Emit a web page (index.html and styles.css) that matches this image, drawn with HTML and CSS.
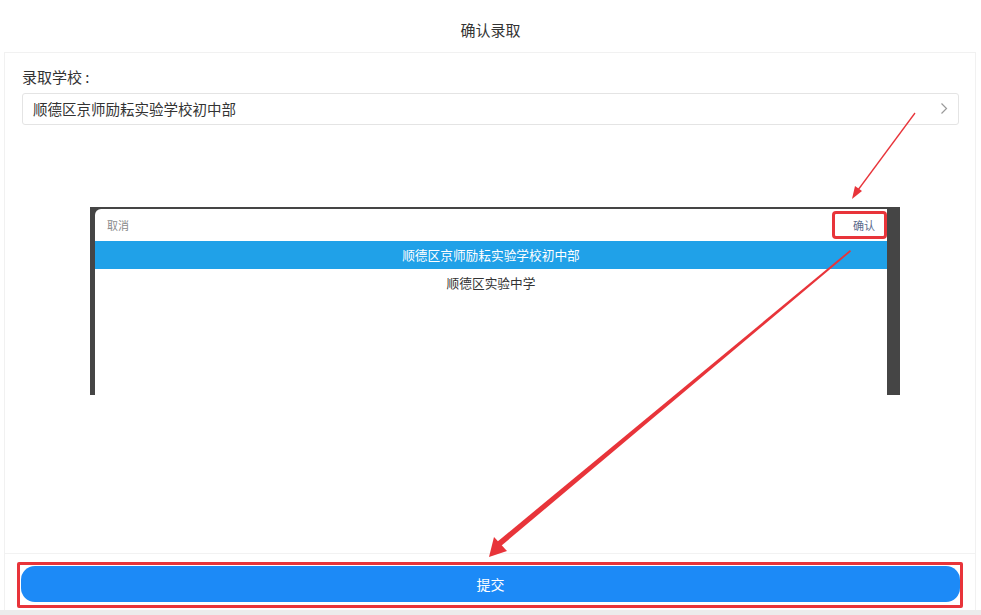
FILE: index.html
```html
<!DOCTYPE html>
<html lang="zh-CN">
<head>
    <meta charset="UTF-8">
    <meta name="viewport" content="width=device-width, initial-scale=1.0">
    <title>确认录取</title>
    <link rel="stylesheet" href="styles.css">
</head>
<body>
    <div class="page">
        <div class="top-bar">确认录取</div>

        <div class="card">
            <div class="card-body">
                <div class="field-label">录取学校 :</div>
                <div class="select-box">
                    <span>顺德区京师励耘实验学校初中部</span>
                    <svg class="chevron" width="8" height="13" viewBox="0 0 8 13">
                        <path d="M1.5 1.5 L6.5 6.5 L1.5 11.5" fill="none" stroke="#9a9a9a" stroke-width="1.2"/>
                    </svg>
                </div>

                <!-- picker screenshot -->
                <div class="picker-shot">
                    <div class="picker">
                        <div class="picker-head">
                            <span class="picker-cancel">取消</span>
                            <span class="picker-ok">确认</span>
                        </div>
                        <div class="picker-row active">顺德区京师励耘实验学校初中部</div>
                        <div class="picker-row">顺德区实验中学</div>
                    </div>
                </div>
            </div>

            <div class="card-foot">
                <div class="mark-box">
                    <button class="submit-btn">提交</button>
                </div>
            </div>
        </div>
        <div class="bottom-strip"></div>

        <!-- annotation arrows -->
        <svg class="arrows" width="981" height="615" viewBox="0 0 981 615">
            <line x1="915" y1="113" x2="858" y2="190" stroke="#e8343a" stroke-width="1.3"/>
            <polygon points="852,199 855,186 862,191" fill="#e8343a"/>
            <polygon points="850,250 851,251.5 501,546 497,542" fill="#e8343a"/>
            <polygon points="489,557 494,537 507,551" fill="#e8343a"/>
        </svg>
    </div>
</body>
</html>
```

FILE: styles.css
```css
* {
    box-sizing: border-box;
}

body {
    margin: 0;
    background: #fff;
    font-family: "Noto Sans CJK SC", "Noto Sans", sans-serif;
    color: #333;
}

.page {
    position: relative;
    width: 981px;
    height: 615px;
    overflow: hidden;
}

/* Title */
.top-bar {
    height: 52px;
    padding-top: 6px;
    display: flex;
    align-items: center;
    justify-content: center;
    font-size: 15px;
    color: #333;
}

.card {
    margin: 0 5px 0 4px;
    height: 558px;
    border: 1px solid #f1f1f1;
    border-bottom: none;
    display: flex;
    flex-direction: column;
}

.card-body {
    flex: 1;
    padding: 14px 16px 0 17px;
}

.field-label {
    font-size: 15px;
    line-height: 20px;
    color: #333;
}

.select-box {
    margin-top: 6px;
    height: 32px;
    border: 1px solid #e4e4e4;
    border-radius: 3px;
    padding: 0 10px 2px 10px;
    display: flex;
    align-items: center;
    justify-content: space-between;
    font-size: 14.5px;
    color: #333;
}

.chevron {
    display: block;
}

/* Picker screenshot */
.picker-shot {
    margin: 82px 0 0 68px;
    width: 810px;
    height: 188px;
    background: #454545;
    padding: 2px 13px 0 5px;
}

.picker {
    height: 100%;
    background: #fff;
    border-top-left-radius: 6px;
}

.picker-head {
    height: 32px;
    display: flex;
    align-items: center;
    justify-content: space-between;
    padding: 0 0 0 12px;
    font-size: 11px;
}

.picker-cancel {
    color: #8a8a8a;
}

.picker-ok {
    color: #5b6b8c;
    width: 55px;
    height: 28px;
    display: flex;
    align-items: center;
    justify-content: flex-end;
    padding-right: 9px;
    border: 3px solid #e8343a;
    border-radius: 4px;
}

.picker-row {
    height: 28px;
    padding-bottom: 2px;
    display: flex;
    align-items: center;
    justify-content: center;
    font-size: 12.7px;
    color: #333;
}

.picker-row.active {
    background: #20a1e8;
    color: #fff;
}

/* Footer */
.card-foot {
    height: 57px;
    border-top: 1px solid #f2f2f2;
    padding: 8px 0 0 12px;
}

.mark-box {
    width: 946px;
    height: 46px;
    border: 3px solid #e8343a;
    border-radius: 2px;
    padding: 1px 0 3px 1px;
}

.submit-btn {
    display: block;
    width: 939px;
    height: 36px;
    border: none;
    border-radius: 14px;
    background: #1c8af7;
    color: #fff;
    font-family: inherit;
    font-size: 14px;
    cursor: pointer;
}

.bottom-strip {
    height: 5px;
    background: #ececec;
}

.arrows {
    position: absolute;
    left: 0;
    top: 0;
    pointer-events: none;
}
```
